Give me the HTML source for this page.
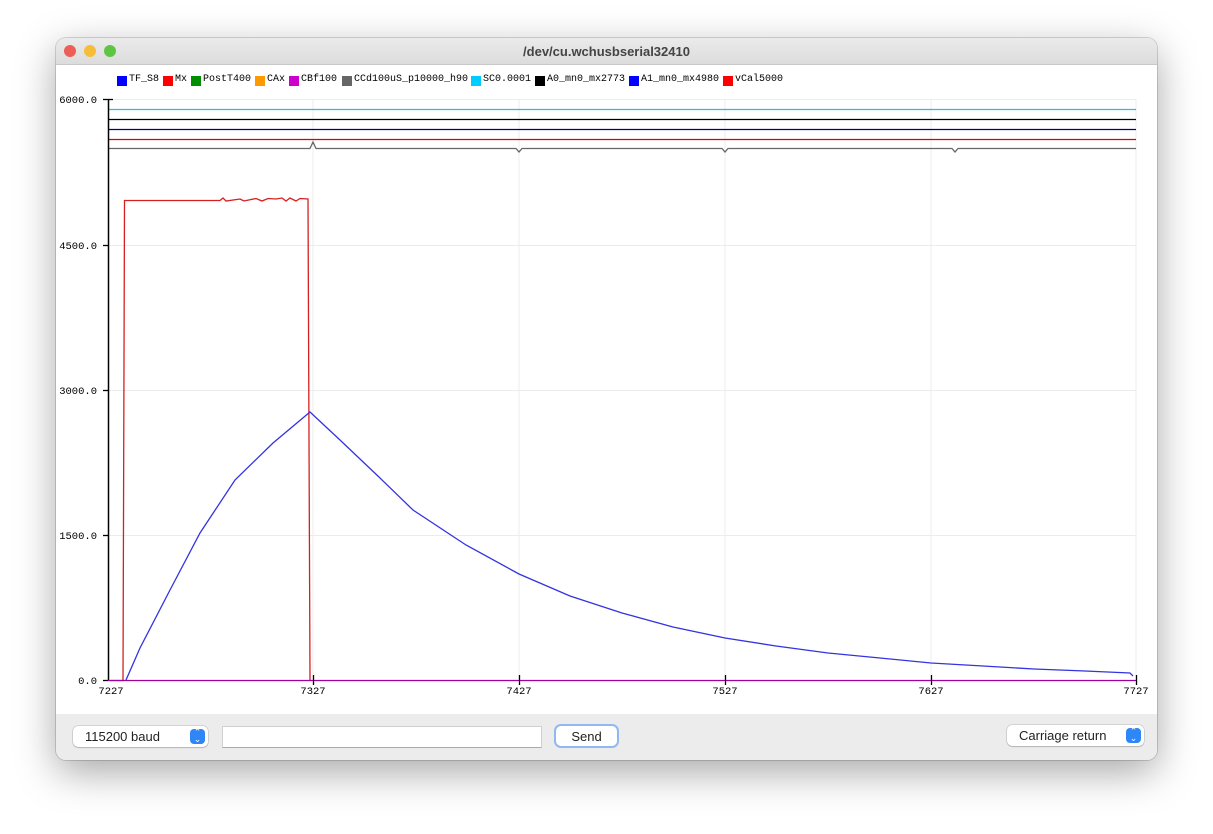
<!DOCTYPE html>
<html><head><style>
body{margin:0;width:1213px;height:834px;background:#fff;position:relative;overflow:hidden;font-family:"Liberation Sans",sans-serif}
.win{position:absolute;left:56px;top:38px;width:1101px;height:722px;border-radius:10px;background:#fff;box-shadow:0 12px 40px rgba(0,0,0,.35),0 0 0 1px rgba(0,0,0,.15);overflow:hidden}
.tb{position:absolute;left:0;top:0;width:100%;height:26px;background:linear-gradient(#ebebeb,#dcdcdc);border-bottom:1px solid #c8c8c8;text-align:center;font-weight:bold;font-size:13px;line-height:27px;color:#444}
.dot{position:absolute;top:7px;width:12px;height:12px;border-radius:50%}
.bb{position:absolute;left:0;top:676px;width:100%;height:46px;background:#ececec}
.lg{position:absolute;top:36px;font-family:"Liberation Mono",monospace;font-size:10px;color:#000;height:12px;line-height:12px}
.sq{position:absolute;top:38px;width:10px;height:10px}
.ctl{position:absolute;background:#fff;border-radius:5px;box-shadow:0 0 0 .5px rgba(0,0,0,.2),0 1px 1px rgba(0,0,0,.15);font-size:13px;color:#222;line-height:21px}
.arr{position:absolute;right:3px;top:3px;width:15px;height:15px;border-radius:4px;background:#2f86f6;color:#fff;font-size:9px;line-height:7px;text-align:center}
</style></head><body>
<div class="win">
<div class="tb">/dev/cu.wchusbserial32410
<div class="dot" style="left:8px;background:#ee5d56"></div>
<div class="dot" style="left:28px;background:#f6bd3a"></div>
<div class="dot" style="left:48px;background:#5ec542"></div></div>
<div class="sq" style="left:61px;background:#0000ff"></div><div class="lg" style="left:73px">TF_S8</div>
<div class="sq" style="left:107px;background:#f00"></div><div class="lg" style="left:119px">Mx</div>
<div class="sq" style="left:135px;background:#008f00"></div><div class="lg" style="left:147px">PostT400</div>
<div class="sq" style="left:199px;background:#ff9900"></div><div class="lg" style="left:211px">CAx</div>
<div class="sq" style="left:233px;background:#cc00cc"></div><div class="lg" style="left:245px">CBf100</div>
<div class="sq" style="left:286px;background:#666"></div><div class="lg" style="left:298px">CCd100uS_p10000_h90</div>
<div class="sq" style="left:415px;background:#00ccff"></div><div class="lg" style="left:427px">SC0.0001</div>
<div class="sq" style="left:479px;background:#000"></div><div class="lg" style="left:491px">A0_mn0_mx2773</div>
<div class="sq" style="left:573px;background:#0000ff"></div><div class="lg" style="left:585px">A1_mn0_mx4980</div>
<div class="sq" style="left:667px;background:#f00"></div><div class="lg" style="left:679px">vCal5000</div>
<div class="bb">
<div class="ctl" style="left:17px;top:12px;width:135px;height:21px"><span style="padding-left:12px">115200 baud</span><div class="arr">⌃<br>⌄</div></div>
<div style="position:absolute;left:166px;top:12px;width:318px;height:20px;background:#fff;border:1px solid #d0d0d0;border-bottom-color:#aaa"></div>
<div class="ctl" style="left:500px;top:12px;width:61px;height:20px;text-align:center;box-shadow:0 0 0 2px #8fb9f0,0 0 0 1px #aaa;">Send</div>
<div class="ctl" style="left:951px;top:11px;width:137px;height:21px"><span style="padding-left:12px">Carriage return</span><div class="arr">⌃<br>⌄</div></div>
</div>
</div>
<svg style="position:absolute;left:0;top:0" width="1213" height="834" font-family="Liberation Mono,monospace" font-size="10.5">
<g stroke="#ececec" stroke-width="1">
<line x1="313" y1="99" x2="313" y2="680"/><line x1="519" y1="99" x2="519" y2="680"/><line x1="725" y1="99" x2="725" y2="680"/><line x1="931" y1="99" x2="931" y2="680"/><line x1="1136" y1="99" x2="1136" y2="680"/>
<line x1="108" y1="99.5" x2="1136" y2="99.5"/><line x1="108" y1="245.5" x2="1136" y2="245.5"/><line x1="108" y1="390.5" x2="1136" y2="390.5"/><line x1="108" y1="535.5" x2="1136" y2="535.5"/>
</g>
<g stroke-width="1.3" fill="none">
<line x1="108" y1="109.5" x2="1136" y2="109.5" stroke="#20c0e0"/>
<line x1="108" y1="119.5" x2="1136" y2="119.5" stroke="#000"/>
<line x1="108" y1="129.5" x2="1136" y2="129.5" stroke="#000080"/>
<line x1="108" y1="139.5" x2="1136" y2="139.5" stroke="#d00"/>
<polyline stroke="#666" points="108,148.5 310,148.5 313,142 316,148.5 516,148.5 519,152 522,148.5 722,148.5 725,152 728,148.5 952,148.5 955,152 958,148.5 1136,148.5"/>
<polyline stroke="#d62020" points="110,680.5 123,680.5 124.5,200.5 220,200.5 223,198 226,201 240,199 244,201 256,198.5 262,201 268,198.5 276,199 282,198 286,201 290,198 296,201 300,198.5 308,199 310,680.5"/>
<path stroke="#3333e0" d="M126,680 L140,648 L170,590 L200,533 L235,480 L273,443 L310,412 L340,440 L380,478 L413,510 L466,545 L519,574 L570,596 L622,613 L673,627 L725,638 L776,646 L828,653 L880,658 L931,663 L983,666 L1034,669 L1085,671 L1130,673 L1133,676"/>
<line x1="108" y1="680.5" x2="1136" y2="680.5" stroke="#a000a0"/>
<line x1="108.5" y1="99" x2="108.5" y2="680" stroke="#000" stroke-width="1.5"/>
<g stroke="#000"><line x1="103" y1="99.5" x2="113" y2="99.5"/><line x1="103" y1="245.5" x2="108" y2="245.5"/><line x1="103" y1="390.5" x2="108" y2="390.5"/><line x1="103" y1="535.5" x2="108" y2="535.5"/><line x1="103" y1="680.5" x2="108" y2="680.5"/>
<line x1="313.5" y1="675" x2="313.5" y2="685"/><line x1="519.5" y1="675" x2="519.5" y2="685"/><line x1="725.5" y1="675" x2="725.5" y2="685"/><line x1="931.5" y1="675" x2="931.5" y2="685"/><line x1="1136.5" y1="675" x2="1136.5" y2="685"/></g>
</g>
<g fill="#000" text-anchor="end">
<text x="97" y="103">6000.0</text><text x="97" y="249">4500.0</text><text x="97" y="394">3000.0</text><text x="97" y="539">1500.0</text><text x="97" y="684">0.0</text></g>
<g fill="#000" text-anchor="middle">
<text x="111" y="694">7227</text><text x="313" y="694">7327</text><text x="519" y="694">7427</text><text x="725" y="694">7527</text><text x="931" y="694">7627</text><text x="1136" y="694">7727</text></g>
</svg>
</body></html>
